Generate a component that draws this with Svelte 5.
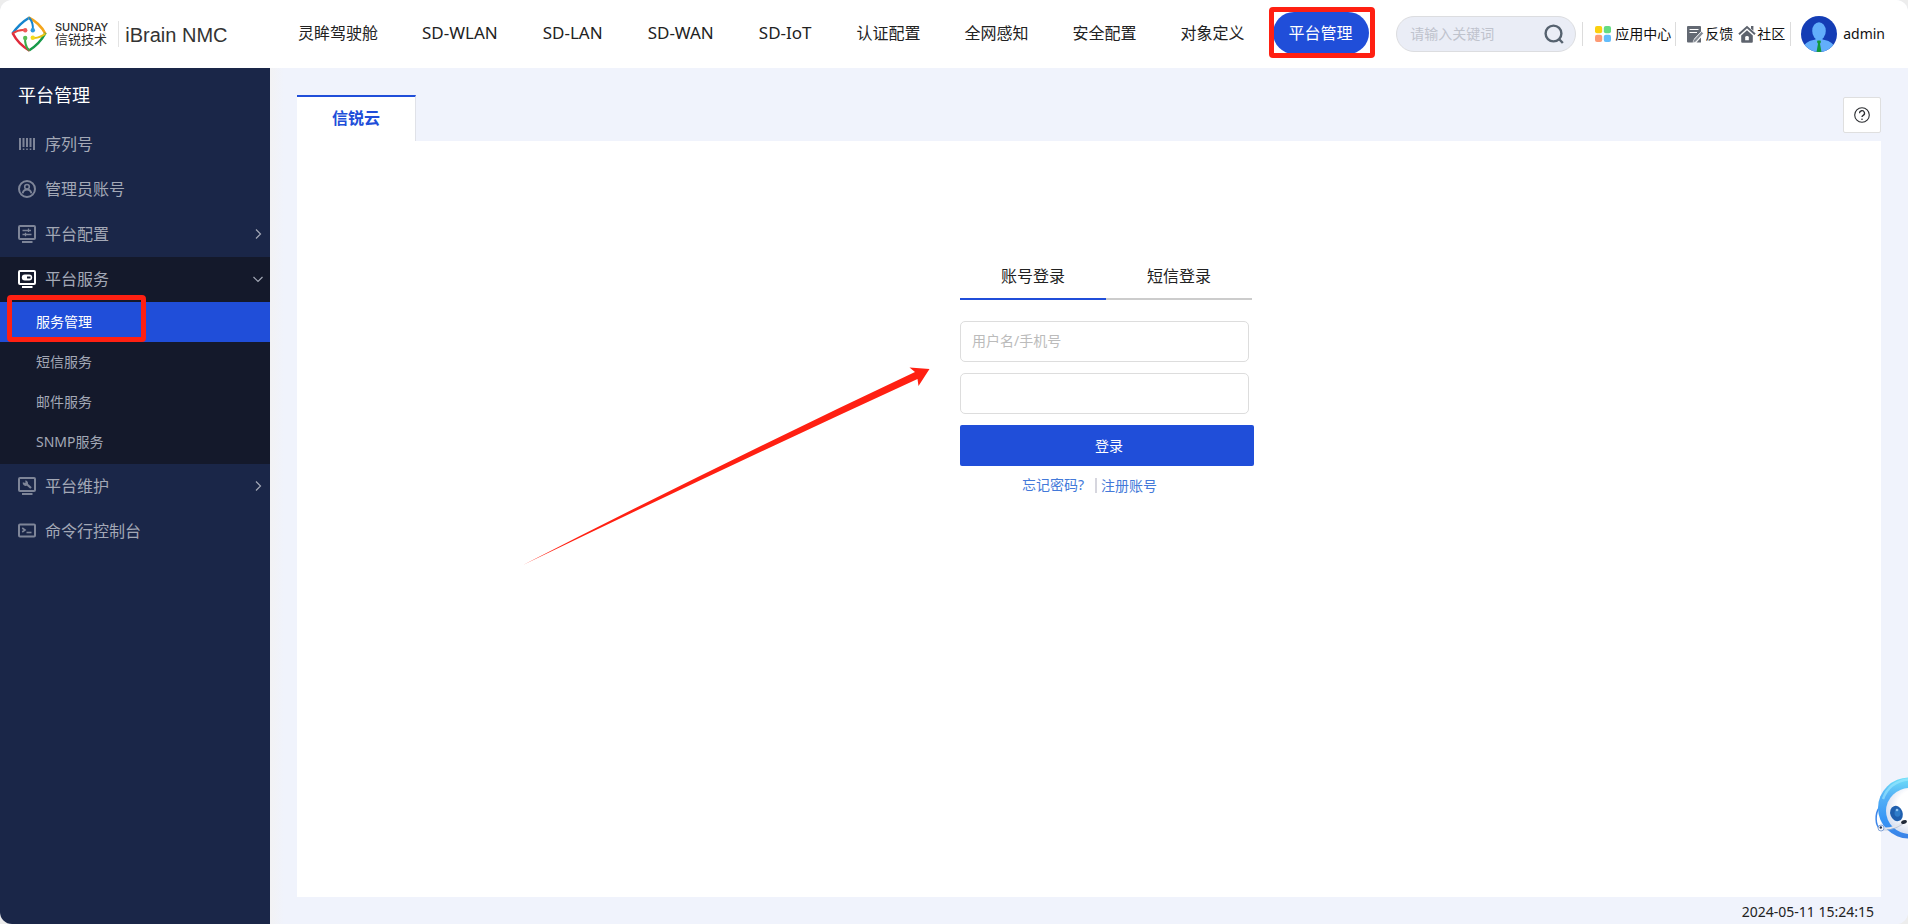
<script>
  const navItems = [
    { label: '灵眸驾驶舱' },
    { label: 'SD-WLAN', latin: true },
    { label: 'SD-LAN', latin: true },
    { label: 'SD-WAN', latin: true },
    { label: 'SD-IoT', latin: true },
    { label: '认证配置' },
    { label: '全网感知' },
    { label: '安全配置' },
    { label: '对象定义' },
    { label: '平台管理', active: true }
  ];

  const menu = [
    { label: '序列号', icon: 'barcode' },
    { label: '管理员账号', icon: 'user' },
    { label: '平台配置', icon: 'config', arrow: 'right' },
    {
      label: '平台服务',
      icon: 'service',
      arrow: 'down',
      open: true,
      children: ['服务管理', '短信服务', '邮件服务', 'SNMP服务']
    },
    { label: '平台维护', icon: 'repair', arrow: 'right' },
    { label: '命令行控制台', icon: 'terminal' }
  ];

  let activeChild = $state('服务管理');
  let loginMode = $state('账号登录');
</script>

{#snippet menuIcon(name)}
  <svg class="menu-icon" viewBox="0 0 18 18" fill="none" stroke="currentColor" stroke-width="2" aria-hidden="true">
    {#if name === 'barcode'}
      <path d="M2 3v12M16 3v12" stroke-width="2" />
      <path d="M5.5 3v9M9 3v9M12.5 3v9" stroke-width="2" />
      <path d="M4.8 14.2h1.6M8.2 14.2h1.6M11.7 14.2h1.6" stroke-width="1.6" />
    {:else if name === 'user'}
      <circle cx="9" cy="9" r="8" />
      <circle cx="9" cy="6.8" r="2.3" stroke-width="1.6" />
      <path d="M4.600 13.400c.6-2.600 2.200-3.900 4.400-3.900s3.800 1.300 4.400 3.900" stroke-width="1.800" />
    {:else if name === 'config'}
      <rect x="1" y="1" width="16" height="13" rx="1" />
      <path d="M4 17h10.500" />
      <path d="M4.500 5.500h8.500M10.500 3.500v3.500M4.500 9.500h9M7.500 7.800v3.500" stroke-width="1.300" />
    {:else if name === 'service'}
      <rect x="1" y="1" width="16" height="13" rx="1" />
      <path d="M4 17h10.500" />
      <rect x="3.800" y="4.500" width="10.400" height="6" rx="3" fill="currentColor" stroke="none" />
      <path d="M9 7.500h3.500" stroke="#14192b" stroke-width="2" />
    {:else if name === 'repair'}
      <rect x="1" y="1" width="16" height="13" rx="1" />
      <path d="M4 17h10.500" />
      <path d="M8 6.500l5 4.500" stroke-width="2.200" />
      <path d="M4.800 5.200a3 3 0 0 0 4.200 3.400A3 3 0 0 0 7.400 3.300V6z" fill="currentColor" stroke="none" />
    {:else}
      <rect x="1" y="2.500" width="16" height="12" rx="1" />
      <path d="M4.200 6l2.800 2-2.800 2" stroke-width="1.600" />
      <path d="M8.500 10.500h5" stroke-width="1.600" />
    {/if}
  </svg>
{/snippet}

<div class="app">
  <header class="header">
    <div class="brand">
      <svg class="brand-mark" viewBox="0 0 36 36" fill="none" aria-hidden="true">
        <path d="M1.500 17.500Q8.500 7.500 18.500 1.500" stroke="#1685ce" stroke-width="2.600" />
        <path d="M17.500 1.500Q29 7 34.500 18" stroke="#f4a51c" stroke-width="2.600" />
        <path d="M34.500 17Q28.500 28 18 34.500" stroke="#189a4a" stroke-width="2.600" />
        <path d="M18.500 34.500Q7.500 28.500 1.500 17" stroke="#df2b3c" stroke-width="2.600" />
        <path d="M18 1.500Q22.500 6.500 21.800 14" stroke="#1685ce" stroke-width="2" />
        <path d="M34.500 17.500Q28.500 22.500 21.800 21.800" stroke="#e8c414" stroke-width="2" />
        <path d="M18 34.500Q13.500 29.500 14.200 22" stroke="#3aae49" stroke-width="2" />
        <path d="M1.500 17.500Q7.500 13.500 14 14.200" stroke="#e8403d" stroke-width="2" />
        <circle cx="21.800" cy="14.200" r="2.200" fill="#2e9be0" />
        <circle cx="21.800" cy="21.800" r="2.200" fill="#f3dc1d" />
        <circle cx="14.200" cy="22" r="2.200" fill="#57bd54" />
        <circle cx="14.200" cy="14.200" r="2.200" fill="#ee5a58" />
      </svg>
      <div class="brand-name">
        <span class="brand-en">SUNDRAY</span>
        <span class="brand-cn">信锐技术</span>
      </div>
      <span class="product">iBrain NMC</span>
    </div>

    <nav class="nav">
      {#each navItems as item}
        <a href="#nav" class="nav-item" class:latin={item.latin} class:active={item.active}>
          {item.label}
          {#if item.active}<span class="mark mark-nav"></span>{/if}
        </a>
      {/each}
    </nav>

    <div class="tools">
      <form class="search" onsubmit={(e) => e.preventDefault()}>
        <input type="text" placeholder="请输入关键词" aria-label="请输入关键词" />
        <button type="submit" aria-label="搜索">
          <svg viewBox="0 0 20 20" fill="none" stroke="#56626f" stroke-width="2.400" aria-hidden="true">
            <circle cx="9.500" cy="9.500" r="7.900" />
            <path d="M15 15l3.800 4" />
          </svg>
        </button>
      </form>
      <a href="#apps" class="tool ruled apps">
        <svg class="apps-icon" viewBox="0 0 16 16" aria-hidden="true">
          <rect x="0" y="0" width="7.200" height="7.200" rx="2" fill="#fbd00f" />
          <rect x="8.800" y="0" width="7.200" height="7.200" rx="2" fill="#65dc82" />
          <rect x="0" y="8.800" width="7.200" height="7.200" rx="2" fill="#fd9a74" />
          <rect x="8.800" y="8.800" width="7.200" height="7.200" rx="2" fill="#63bdfb" />
        </svg>
        应用中心
      </a>
      <a href="#feedback" class="tool ruled">
        <svg class="tool-icon" viewBox="0 0 18 18" aria-hidden="true">
          <path d="M1 2q0-1 1-1h12q1 0 1 1v4.500L8 14v3.500H2q-1 0-1-1z" fill="#636973" />
          <path d="M3.500 4.500h9M3.500 7.500h7.500" stroke="#fff" stroke-width="1" />
          <path d="M15.500 6.500l2 1.800-7.800 8.700-2.600.7.500-2.600z" fill="#858b94" stroke="#fff" stroke-width=".6" />
          <path d="M10.500 17.500h4.500v-5z" fill="#636973" />
        </svg>
        反馈
      </a>
      <a href="#community" class="tool">
        <svg class="tool-icon" viewBox="0 0 18 18" aria-hidden="true">
          <path d="M1 9.200L9 2l8 7.200" fill="none" stroke="#5d636d" stroke-width="2" />
          <path d="M13 1h2.400v4.800L13 3.700z" fill="#5d636d" />
          <path d="M9 5.200l5.800 5.200v6.300q0 1-1 1H4.200q-1 0-1-1v-6.300z" fill="#5d636d" />
          <path d="M7.200 15.200v-3q0-1.200 1.800-1.200t1.800 1.200v3z" fill="#fff" />
        </svg>
        社区
      </a>
      <a href="#me" class="tool ruled account">
        <svg class="avatar" viewBox="0 0 36 36" aria-hidden="true">
          <defs><clipPath id="avatar-clip"><circle cx="18" cy="18" r="18" /></clipPath></defs>
          <g clip-path="url(#avatar-clip)">
            <rect width="36" height="36" fill="#143db5" />
            <path d="M14.500 18h7v5.500c6 1 10 3 11.500 7V36H3v-5.500c1.500-4 5.500-6 11.500-7z" fill="#62aefb" />
            <ellipse cx="18" cy="15" rx="6.800" ry="8.700" fill="#62aefb" />
            <path d="M16.500 24.500h3l.5 1.500-1 1.800 1.500 8.200h-5l1.500-8.200-1-1.800z" fill="#12993a" />
          </g>
        </svg>
        admin
      </a>
    </div>
  </header>

  <div class="body">
    <aside class="sidebar">
      <h1>平台管理</h1>
      <ul class="menu">
        {#each menu as item}
          <li class:open={item.open}>
            <a href="#menu" class="menu-item">
              {@render menuIcon(item.icon)}
              <span class="menu-label">{item.label}</span>
              {#if item.arrow}
                <svg class="chevron" class:down={item.arrow === 'down'} viewBox="0 0 10 10" fill="none" stroke="currentColor" stroke-width="1.200" aria-hidden="true">
                  <path d="M3 .5L7.500 5 3 9.500" />
                </svg>
              {/if}
            </a>
            {#if item.children}
              <ul class="submenu">
                {#each item.children as child}
                  <li>
                    <button type="button" class="sub-item" class:active={child === activeChild} onclick={() => (activeChild = child)}>
                      {child}
                    </button>
                    {#if child === '服务管理'}<span class="mark mark-side"></span>{/if}
                  </li>
                {/each}
              </ul>
            {/if}
          </li>
        {/each}
      </ul>
    </aside>

    <main class="main">
      <div class="tab-bar">
        <button type="button" class="page-tab">信锐云</button>
        <button type="button" class="help" aria-label="帮助">
          <svg viewBox="0 0 16 16" fill="none" stroke="#2b2d31" stroke-width="1.100" aria-hidden="true">
            <circle cx="8" cy="8" r="7.300" />
            <path d="M5.500 6.200a2.500 2.500 0 1 1 3.700 2.200c-.8.500-1.200.8-1.200 1.700" stroke-width="1.300" />
            <circle cx="8" cy="12.200" r=".8" fill="#2b2d31" stroke="none" />
          </svg>
        </button>
      </div>

      <section class="panel">
        <form class="login" onsubmit={(e) => e.preventDefault()}>
          <div class="login-tabs">
            {#each ['账号登录', '短信登录'] as mode}
              <button type="button" class:active={mode === loginMode} onclick={() => (loginMode = mode)}>{mode}</button>
            {/each}
          </div>
          <input type="text" placeholder="用户名/手机号" aria-label="用户名/手机号" />
          <input type="password" aria-label="密码" />
          <button type="submit" class="submit">登录</button>
          <div class="links">
            <a href="#forgot">忘记密码?</a>
            <a href="#register" class="register">注册账号</a>
          </div>
          <svg class="pointer" viewBox="0 0 408 200" aria-hidden="true">
            <path d="M1 199Q200 97 393 6L387.500 1.500L407.500 3L396.500 20L395.500 13Q202 102 1 199z" fill="#ff2012" />
          </svg>
        </form>
      </section>

      <footer class="footer"><time>2024-05-11 15:24:15</time></footer>
    </main>
  </div>

  <button type="button" class="assistant" aria-label="智能助手">
    <svg viewBox="0 0 34 64" aria-hidden="true">
      <defs>
        <linearGradient id="ring" x1="0" y1="0" x2="0" y2="1">
          <stop offset="0" stop-color="#6fe0f8" />
          <stop offset=".3" stop-color="#55b2f6" />
          <stop offset=".7" stop-color="#3694f5" />
          <stop offset="1" stop-color="#3b82e6" />
        </linearGradient>
        <radialGradient id="face" cx=".6" cy=".4" r=".6">
          <stop offset=".6" stop-color="#ffffff" />
          <stop offset="1" stop-color="#dbe2f2" />
        </radialGradient>
      </defs>
      <path d="M5 32C1 38 1 49 6 53" fill="none" stroke="#3c86ea" stroke-width="1.500" />
      <ellipse cx="35" cy="32" rx="31" ry="30.500" fill="url(#ring)" />
      <path d="M9 23C13 12 22 5 34 3.500" fill="none" stroke="#9eeaff" stroke-width="2.500" opacity=".6" />
      <ellipse cx="36" cy="35" rx="24" ry="23" fill="url(#face)" />
      <ellipse cx="22.500" cy="37.500" rx="6.200" ry="7.800" fill="#1f5fae" transform="rotate(-20 22.500 37.500)" />
      <ellipse cx="23.500" cy="37" rx="3" ry="3.800" fill="#2f7cc9" />
      <circle cx="23" cy="34" r="1.300" fill="#8fc4f2" />
      <path d="M7 52C16 54 23 50 30 46" fill="none" stroke="#e3e5ec" stroke-width="2" />
      <path d="M8 53.500C16 55.500 23 51.500 29 48" fill="none" stroke="#a9b2c6" stroke-width=".6" />
      <ellipse cx="30" cy="46" rx="3" ry="1.800" fill="#222a38" transform="rotate(-20 30 46)" />
      <circle cx="7" cy="52" r="3" fill="#f3f5fa" stroke="#3b6fc0" stroke-width=".6" />
      <circle cx="6.800" cy="51.500" r="1.200" fill="#26334d" />
    </svg>
  </button>
</div>

<style>
  :global(body) {
    background: #ededed;
  }

  .app,
  .app * {
    box-sizing: border-box;
  }

  .app {
    position: relative;
    display: flex;
    flex-direction: column;
    min-height: 100vh;
    overflow: hidden;
    border-radius: 12px;
    background: #f0f3fc;
    color: #222;
    font: 14px/20px 'Noto Sans', 'Noto Sans CJK SC', sans-serif;
  }

  a {
    color: inherit;
    text-decoration: none;
  }

  button,
  input {
    margin: 0;
    padding: 0;
    border: 0;
    background: none;
    color: inherit;
    font: inherit;
  }

  button {
    cursor: pointer;
  }

  input {
    outline: none;
  }

  ul {
    margin: 0;
    padding: 0;
    list-style: none;
  }

  svg {
    display: block;
    flex: none;
  }

  /* Header */
  .header {
    display: flex;
    align-items: center;
    height: 68px;
    padding-right: 23px;
    background: #fff;
    white-space: nowrap;
  }

  .brand {
    display: flex;
    align-items: center;
    width: 276px;
    padding-left: 11px;
    flex: none;
  }

  .brand-mark {
    width: 36px;
    height: 36px;
  }

  .brand-name {
    display: flex;
    flex-direction: column;
    margin-left: 8px;
    padding-right: 10px;
    border-right: 1px solid #e3e3e3;
    color: #2b2b2b;
  }

  .brand-en {
    font: 500 11px/12px Inter, 'Liberation Sans', sans-serif;
  }

  .brand-cn {
    font: 13px/14px 'Liberation Sans', 'Noto Sans CJK SC', sans-serif;
  }

  .product {
    margin: 2px 0 0 6px;
    color: #333;
    font: 20px/24px 'Liberation Sans', Arial, sans-serif;
  }

  .nav {
    display: flex;
    align-items: center;
    margin-top: -2px;
  }

  .nav-item {
    position: relative;
    margin: 0 6px;
    padding: 0 16px;
    border-radius: 21px;
    font-size: 16px;
    line-height: 42px;
  }

  .nav-item.latin {
    margin-right: 7px;
    font-size: 17px;
  }

  .nav-item.active {
    background: #204ed9;
    color: #fff;
  }

  .mark {
    position: absolute;
    border: 5px solid #ff2012;
    border-radius: 4px;
    pointer-events: none;
  }

  .mark-nav {
    inset: -5px -6px -4px -4px;
  }

  .tools {
    display: flex;
    align-items: center;
    margin-left: auto;
  }

  .search {
    display: flex;
    align-items: center;
    width: 180px;
    height: 36px;
    margin-right: 6px;
    padding: 0 11px 0 13px;
    border: 1px solid #dcdde0;
    border-radius: 18px;
    background: #eaedf6;
  }

  .search input {
    flex: 1;
    min-width: 0;
  }

  .search svg {
    width: 20px;
    height: 20px;
  }

  input::placeholder {
    color: #bbb;
    opacity: 1;
  }

  .search input::placeholder {
    color: #bfc3cd;
  }

  .tool {
    display: flex;
    align-items: center;
    height: 24px;
    margin-right: 5px;
    color: #111;
  }

  .ruled {
    padding-left: 10px;
    border-left: 1px solid #dcdcdc;
  }

  .apps {
    margin-right: 4px;
  }

  .apps-icon {
    width: 16px;
    height: 16px;
    margin: 0 4px 0 2px;
  }

  .tool-icon {
    width: 18px;
    height: 18px;
    margin-right: 1px;
  }

  .avatar {
    width: 36px;
    height: 36px;
    margin-right: 6px;
  }

  .account {
    margin-right: 0;
  }

  /* Sidebar */
  .body {
    display: flex;
    flex: 1;
  }

  .sidebar {
    flex: none;
    width: 270px;
    background: #1a2648;
    color: #a3a8b6;
  }

  h1 {
    margin: 0;
    padding: 0 18px;
    color: #fff;
    font-size: 18px;
    font-weight: 400;
    line-height: 54px;
  }

  .menu-item {
    display: flex;
    align-items: center;
    height: 45px;
    padding: 0 7px 2px 18px;
    font-size: 16px;
  }

  .menu-icon {
    width: 18px;
    height: 18px;
    margin-right: 9px;
    color: #7e8598;
  }

  .menu-label {
    flex: 1;
  }

  .chevron {
    width: 10px;
    height: 10px;
  }

  .chevron.down {
    transform: rotate(90deg);
  }

  .open {
    background: #14192b;
  }

  .open .menu-icon {
    color: #fff;
  }

  .submenu {
    padding-bottom: 2px;
  }

  .submenu li {
    position: relative;
  }

  .sub-item {
    display: block;
    width: 100%;
    height: 40px;
    padding-left: 36px;
    text-align: left;
  }

  .sub-item.active {
    background: #204ed9;
    color: #fff;
  }

  .mark-side {
    inset: -7px 124px 0 7px;
  }

  /* Main area */
  .main {
    display: flex;
    flex: 1;
    flex-direction: column;
    min-width: 0;
    padding: 27px 27px 0;
    background: linear-gradient(90deg, #f2f2f4, #f0f3fc 14px);
  }

  .tab-bar {
    display: flex;
    align-items: flex-end;
    justify-content: space-between;
    height: 46px;
  }

  .page-tab {
    height: 46px;
    padding: 0 35px 2px;
    border-top: 2px solid #204ed9;
    border-right: 1px solid #e0e2e8;
    background: #fff;
    color: #204ed9;
    font-size: 16px;
    font-weight: 700;
  }

  .help {
    display: grid;
    place-items: center;
    width: 38px;
    height: 36px;
    margin-bottom: 8px;
    border: 1px solid #dfdfdf;
    border-radius: 2px;
    background: #fff;
  }

  .help svg {
    width: 16px;
    height: 16px;
  }

  .panel {
    flex: 1;
    padding: 112px 0 40px 36px;
    background: #fff;
  }

  .login {
    position: relative;
    display: flex;
    flex-direction: column;
    width: 294px;
    margin: 0 auto;
  }

  .login-tabs {
    display: flex;
    margin: 0 2px 21px 0;
  }

  .login-tabs button {
    flex: 1;
    height: 47px;
    border-bottom: 2px solid #ccc;
    font-size: 16px;
  }

  .login-tabs button.active {
    border-color: #204ed9;
  }

  .login input {
    height: 41px;
    margin: 0 5px 11px 0;
    padding: 0 11px 2px;
    border: 1px solid #ddd;
    border-radius: 5px;
  }

  .submit {
    height: 41px;
    padding-left: 4px;
    border-radius: 2px;
    background: #204ed9;
    color: #fff;
  }

  .links {
    display: flex;
    align-items: center;
    margin: 9px 0 0 62px;
    color: #4379d9;
  }

  .register {
    margin-left: 11px;
    padding-left: 4px;
    border-left: 2px solid #d6d6de;
    line-height: 15px;
  }

  .pointer {
    position: absolute;
    top: 113px;
    right: 324px;
    width: 408px;
    height: 200px;
    pointer-events: none;
  }

  .footer {
    height: 27px;
    padding: 5px 7px 0 0;
    text-align: right;
  }

  .assistant {
    position: absolute;
    right: 0;
    bottom: 84px;
  }

  .assistant svg {
    width: 34px;
    height: 64px;
  }
</style>
